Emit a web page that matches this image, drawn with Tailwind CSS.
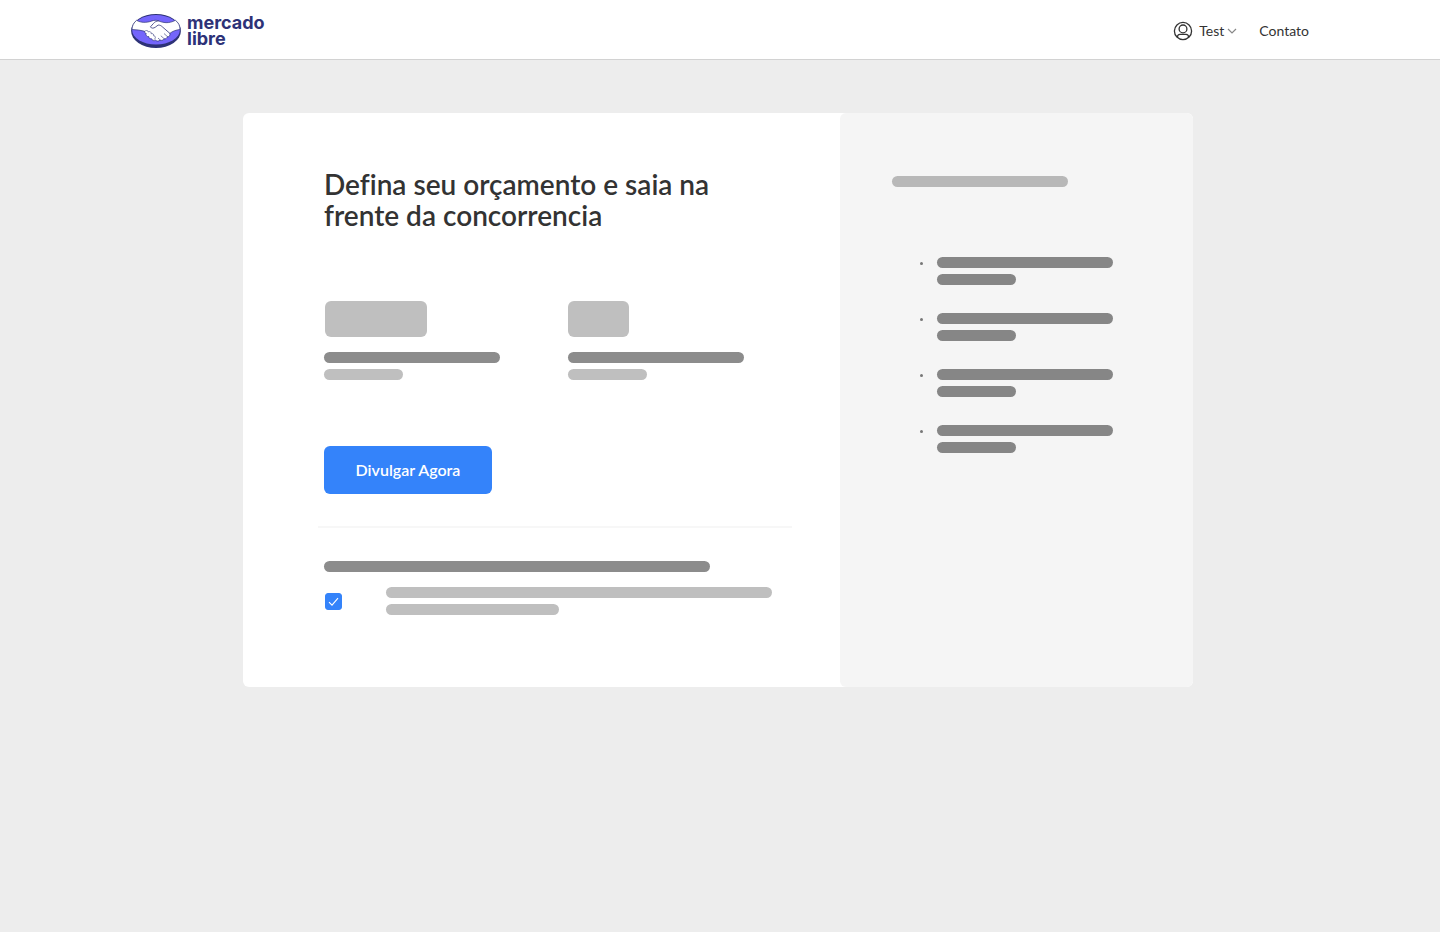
<!DOCTYPE html>
<html lang="pt-BR">
<head>
    <meta charset="UTF-8">
    <meta name="viewport" content="width=device-width, initial-scale=1.0">
    <title>Mercado Libre</title>
    <script src="https://cdn.jsdelivr.net/npm/@tailwindcss/browser@4"></script>
</head>
<body class="min-h-screen bg-[#ededed] font-['Lato',sans-serif] text-[#333333]">

    <header class="border-b border-[#d2d2d2] bg-white">
        <div class="mx-auto flex h-[59px] max-w-[1180px] items-center justify-between px-px">
            <a href="#" class="flex items-center gap-[6px] pt-[2px]">
                <svg class="h-[34px] w-[50px]" viewBox="0 0 50 34" aria-hidden="true">
                    <ellipse cx="25" cy="17" rx="24.900" ry="17" fill="#2d3277"/>
                    <ellipse cx="25" cy="15.800" rx="23.900" ry="14.700" fill="#7465fb"/>
                    <!-- hands -->
                    <path d="M5.600 6.300C10 8.900 15.500 9 21 6.900c2-.7 4.300-.8 6.300-.1 4.700 2 10.500 3.100 17.100-.5 3.100 2.300 4.700 5.500 4.600 9.200-4 .4-7.400 1.700-10.200 3.900.8 2.100-.8 3.500-2.500 3.300-.4 1.700-1.700 2.500-3.300 2.100-.9 1.500-2.400 2-3.900 1.300-1.400 1.400-3.400 1.300-4.500 0-1.300 1.100-3.700.5-3.900-1.300-1.600.3-2.900-.7-2.900-2.200-2.100.2-3.400-1.500-2.600-3.200-1.400-.4-2-1.200-1.600-2.200C9.500 16.200 5.200 15.600 1 15.500 1 11.800 2.800 8.600 5.600 6.300Z" fill="#fff" stroke="#2d3277" stroke-width=".7"/>
                    <path d="M27.400 6.800c-2.100.2-3.700 1.200-5 2.700l-3 3.400c.9 1.700 3.400 1.500 4.900.3l2.800-2.100c1.700-.2 3 .6 4.200 1.700l7.500 6.500" fill="none" stroke="#2d3277" stroke-width=".8" stroke-linecap="round" stroke-linejoin="round"/>
                    <path d="M13.600 17.500c.8-1.300 3.400-1.600 3.700.4 1.700-.9 3.200.3 2.900 1.800 1.600-.5 2.900.7 2.500 2.200 1.900 0 2.300 1.900.7 3.400M36.300 22.500l-3-2.700M33 24.600l-2.900-2.600M29.100 25.900l-1.800-1.600" fill="none" stroke="#2d3277" stroke-width=".6" stroke-linecap="round" stroke-linejoin="round"/>
                </svg>
                <span class="flex flex-col font-['Inter',sans-serif] text-[18px] leading-[16px] font-bold text-[#2d3277]">
                    <span>mercado</span>
                    <span>libre</span>
                </span>
            </a>
            <nav class="flex items-center gap-[22px] pt-[2px] text-[14px] leading-[18px]">
                <button type="button" class="flex items-center gap-[6px]">
                    <svg class="size-5" viewBox="0 0 20 20" fill="none" stroke="#333" stroke-width="1.300" aria-hidden="true">
                        <circle cx="10" cy="10" r="8.600"/>
                        <circle cx="10" cy="7.900" r="3.900"/>
                        <path d="M4.400 16.300c0-2 .9-2.900 2.600-2.900h6c1.700 0 2.600.9 2.600 2.900"/>
                    </svg>
                    <span class="flex items-center gap-[3px]">
                        Test
                        <svg class="h-[6px] w-[10px]" viewBox="0 0 10 6" fill="none" stroke="#888" stroke-width="1.200" aria-hidden="true">
                            <path d="M1 1l4 4 4-4"/>
                        </svg>
                    </span>
                </button>
                <a href="#">Contato</a>
            </nav>
        </div>
    </header>

    <main class="px-4 pt-[53px] pb-12">
        <div class="mx-auto flex max-w-[954px] pr-1">
            <div class="flex w-full rounded-md bg-white">

                <section class="min-w-0 flex-1 pt-[56px] pr-[48px] pb-[72px] pl-[75px]">
                    <div class="pl-[6px]">
                        <h1 class="max-w-[420px] text-[28px] leading-[31px] font-semibold [font-variant-ligatures:none]">Defina seu orçamento e saia na frente da concorrencia</h1>

                        <div class="mt-[70px] flex gap-[68px]">
                            <div class="w-[176px]">
                                <div class="ml-px h-[36px] w-[102px] rounded-md bg-[#bfbfbf]"></div>
                                <div class="mt-[15px] h-[11px] rounded-full bg-[#8c8c8c]"></div>
                                <div class="mt-[6px] h-[11px] w-[79px] rounded-full bg-[#bfbfbf]"></div>
                            </div>
                            <div class="w-[176px]">
                                <div class="h-[36px] w-[61px] rounded-md bg-[#bfbfbf]"></div>
                                <div class="mt-[15px] h-[11px] rounded-full bg-[#8c8c8c]"></div>
                                <div class="mt-[6px] h-[11px] w-[79px] rounded-full bg-[#bfbfbf]"></div>
                            </div>
                        </div>

                        <button type="button" class="mt-[66px] block h-[48px] w-[168px] rounded-md bg-[#3483fa] text-[16px] font-semibold text-white">Divulgar Agora</button>
                    </div>

                    <hr class="mt-[32px] border-t-2 border-[#f7f7f7]">

                    <div class="mt-[33px] pl-[6px]">
                        <div class="h-[11px] w-[386px] rounded-full bg-[#8c8c8c]"></div>
                        <label class="mt-[15px] flex items-center gap-[44px] pl-px">
                            <span class="relative size-[17px]">
                                <input type="checkbox" checked aria-label="Aceitar" class="block size-[17px] appearance-none rounded-[3px] border border-[#3483fa] checked:bg-[#3483fa]">
                                <svg class="pointer-events-none absolute inset-0 size-[17px]" viewBox="0 0 17 17" fill="none" stroke="#fff" stroke-width="1.100" aria-hidden="true">
                                    <path d="M4 9.200l3 3 6-7"/>
                                </svg>
                            </span>
                            <span class="block">
                                <span class="block h-[11px] w-[386px] rounded-full bg-[#bfbfbf]"></span>
                                <span class="mt-[6px] block h-[11px] w-[173px] rounded-full bg-[#bfbfbf]"></span>
                            </span>
                        </label>
                    </div>
                </section>

                <aside class="w-[353px] shrink-0 rounded-md bg-[#f5f5f5] pt-[63px] pl-[52px]">
                    <div class="h-[11px] w-[176px] rounded-full bg-[#b8b8b8]"></div>
                    <ul class="mt-[70px] flex flex-col gap-[28px] pl-[28px]">
                        <li class="flex gap-[14px]">
                            <span class="mt-[5px] size-[3px] rounded-full bg-[#777777]"></span>
                            <div>
                                <div class="h-[11px] w-[176px] rounded-full bg-[#868686]"></div>
                                <div class="mt-[6px] h-[11px] w-[79px] rounded-full bg-[#868686]"></div>
                            </div>
                        </li>
                        <li class="flex gap-[14px]">
                            <span class="mt-[5px] size-[3px] rounded-full bg-[#777777]"></span>
                            <div>
                                <div class="h-[11px] w-[176px] rounded-full bg-[#868686]"></div>
                                <div class="mt-[6px] h-[11px] w-[79px] rounded-full bg-[#868686]"></div>
                            </div>
                        </li>
                        <li class="flex gap-[14px]">
                            <span class="mt-[5px] size-[3px] rounded-full bg-[#777777]"></span>
                            <div>
                                <div class="h-[11px] w-[176px] rounded-full bg-[#868686]"></div>
                                <div class="mt-[6px] h-[11px] w-[79px] rounded-full bg-[#868686]"></div>
                            </div>
                        </li>
                        <li class="flex gap-[14px]">
                            <span class="mt-[5px] size-[3px] rounded-full bg-[#777777]"></span>
                            <div>
                                <div class="h-[11px] w-[176px] rounded-full bg-[#868686]"></div>
                                <div class="mt-[6px] h-[11px] w-[79px] rounded-full bg-[#868686]"></div>
                            </div>
                        </li>
                    </ul>
                </aside>

            </div>
        </div>
    </main>

</body>
</html>
